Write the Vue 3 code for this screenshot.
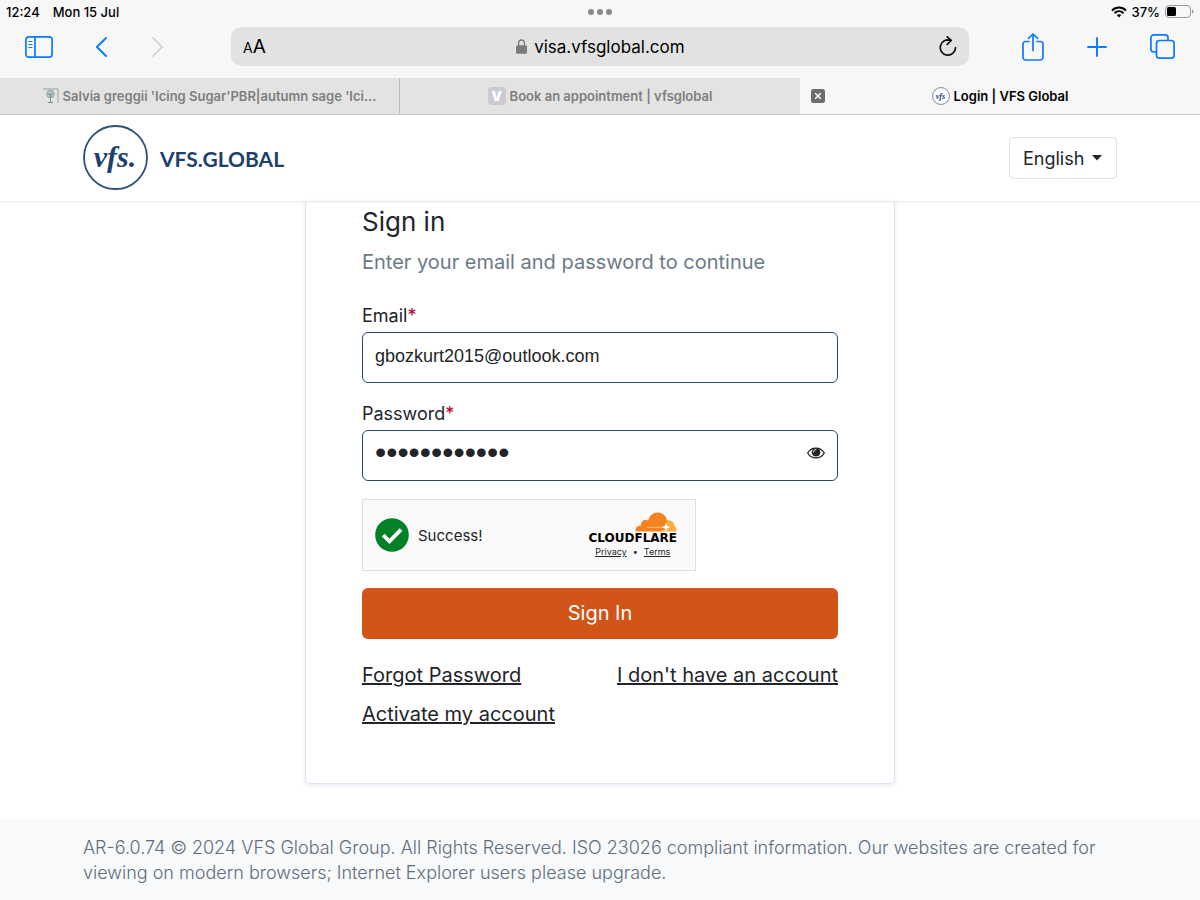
<template>
  <div class="screen">
    <div class="browser">
      <div class="status-bar">
        <div class="status-left">
          <span>12:24</span>
          <span>Mon 15 Jul</span>
        </div>
        <div class="dots"><i></i><i></i><i></i></div>
        <div class="status-right">
          <svg width="16" height="12" viewBox="0 0 16 12" fill="none" stroke="#000" stroke-width="2">
            <path d="M1 4.6C5 .6 11 .6 15 4.6" />
            <path d="M3.5 7.2c2.6-2.5 6.4-2.5 9 0" />
            <path d="M5.7 9.1c1.3-1.2 3.3-1.2 4.6 0L8 11.6z" fill="#000" stroke="none" />
          </svg>
          <span>37%</span>
          <svg width="29" height="14" viewBox="0 0 29 14">
            <rect x=".5" y=".5" width="25" height="12" rx="3.5" fill="none" stroke="#999" />
            <rect x="2" y="2" width="9" height="9" rx="1.5" fill="#000" />
            <path d="M27 4.5c2 .8 2 3.200 0 4z" fill="#999" />
          </svg>
        </div>
      </div>

      <div class="toolbar">
        <div class="tools tools-left">
          <button class="tool" aria-label="Sidebar">
            <svg width="28" height="22" viewBox="0 0 28 22" fill="none" stroke="#0a7aff" stroke-width="1.700">
              <rect x=".9" y=".9" width="26.200" height="20.200" rx="2.800" />
              <path d="M10 1v20" />
              <path d="M3.500 5.500h4M3.500 8.500h4M3.500 11.500h4" stroke-width="1.200" />
            </svg>
          </button>
          <button class="tool" aria-label="Back">
            <svg width="12" height="20" viewBox="0 0 12 20" fill="none" stroke="#0a7aff" stroke-width="1.900" stroke-linecap="round" stroke-linejoin="round">
              <path d="M10 1L.9 10l9.100 9" />
            </svg>
          </button>
          <button class="tool" aria-label="Forward" disabled>
            <svg width="12" height="20" viewBox="0 0 12 20" fill="none" stroke="#cfcfcf" stroke-width="1.700" stroke-linecap="round" stroke-linejoin="round">
              <path d="M2 1l9.100 9L2 19" />
            </svg>
          </button>
        </div>
        <div class="address">
          <button class="tool text-size" aria-label="Text size"><small>A</small>A</button>
          <div class="url">
            <svg width="11" height="15" viewBox="0 0 11 15">
              <path d="M2.600 7V4a2.900 3 0 0 1 5.800 0v3" fill="none" stroke="#7c7c7f" stroke-width="1.300" />
              <rect x="0" y="6.200" width="11" height="8.500" rx="1.500" fill="#7c7c7f" />
            </svg>
            <input v-model="url" type="text" aria-label="Address" />
          </div>
          <button class="tool" aria-label="Reload">
            <svg width="18" height="21" viewBox="0 0 18 21" fill="none" stroke="#111" stroke-width="1.700" stroke-linecap="round" stroke-linejoin="round">
              <path d="M16.500 11.500A7.600 7.600 0 1 1 11.500 4.400L8.500 4" />
              <path d="M8.200 .9l4 3.600-4 3.900" />
            </svg>
          </button>
        </div>
        <div class="tools tools-right">
          <button class="tool" aria-label="Share">
            <svg width="22" height="28" viewBox="0 0 22 28" fill="none" stroke="#0a7aff" stroke-width="1.700" stroke-linecap="round" stroke-linejoin="round">
              <path d="M7 8.500H3.500A2.500 2.500 0 0 0 1 11v13.500A2.500 2.500 0 0 0 3.500 27h15a2.500 2.500 0 0 0 2.500-2.500V11a2.500 2.500 0 0 0-2.500-2.500H15" />
              <path d="M11 17.500V1.200M6.500 5.400L11 1l4.500 4.400" />
            </svg>
          </button>
          <button class="tool" aria-label="New tab">
            <svg width="20" height="20" viewBox="0 0 20 20" stroke="#0a7aff" stroke-width="1.900" stroke-linecap="round">
              <path d="M10 1v18M1 10h18" />
            </svg>
          </button>
          <button class="tool" aria-label="Show tabs">
            <svg width="25" height="25" viewBox="0 0 25 25" fill="none" stroke="#0a7aff" stroke-width="1.700">
              <path d="M6.500 18H3.800A2.900 2.900 0 0 1 .9 15.100V3.800A2.900 2.900 0 0 1 3.800.9h11.300A2.900 2.900 0 0 1 18 3.800v2.700" />
              <rect x="6.500" y="6.500" width="17.600" height="17.600" rx="2.900" />
            </svg>
          </button>
        </div>
      </div>

      <div class="tabs">
        <div class="tab">
          <svg width="16" height="16" viewBox="0 0 16 16" fill="none" stroke="#8fa3a2">
            <path d="M0 1h15v14" />
            <circle cx="7.500" cy="6" r="3.800" fill="#b3c2c0" stroke="#93a9a7" />
            <path d="M7.500 6v8M5 14.500h5M5.500 5l2 2.500 2-2.500" stroke="#6f8f8d" />
          </svg>
          <span>Salvia greggii 'Icing Sugar'PBR|autumn sage 'Ici...</span>
        </div>
        <div class="tab">
          <b class="letter-icon">V</b>
          <span>Book an appointment | vfsglobal</span>
        </div>
        <div class="tab active">
          <button class="tool close" aria-label="Close tab">
            <svg width="14" height="14" viewBox="0 0 14 14">
              <rect width="14" height="14" rx="2.500" fill="#6c6c6e" />
              <path d="M4.200 4.200l5.600 5.600M9.800 4.200L4.200 9.800" stroke="#fff" stroke-width="1.400" />
            </svg>
          </button>
          <svg width="18" height="18" viewBox="0 0 66 66">
            <circle cx="33" cy="33" r="31" fill="#fff" stroke="#5b7391" stroke-width="3" />
            <text x="31" y="43" text-anchor="middle" class="logo-script">vfs</text>
          </svg>
          <span>Login | VFS Global</span>
        </div>
      </div>
    </div>

    <header class="site-header">
      <div class="container header-row">
        <a href="#" class="brand">
          <svg width="66" height="66" viewBox="0 0 66 66">
            <circle cx="32.500" cy="32.500" r="31.500" fill="#fff" stroke="#2d5077" stroke-width="1.800" />
            <text x="32" y="42" text-anchor="middle" class="logo-script">vfs.</text>
          </svg>
          <span>VFS.GLOBAL</span>
        </a>
        <div class="language">
          <select v-model="language" aria-label="Language">
            <option>English</option>
          </select>
          <svg width="10" height="6" viewBox="0 0 10 6"><path d="M0 0h10L5 5.500z" fill="#212529" /></svg>
        </div>
      </div>
    </header>

    <main>
      <form class="card" @submit.prevent>
        <h1>Sign in</h1>
        <p class="subtitle">Enter your email and password to continue</p>

        <label for="email">Email<span class="required">*</span></label>
        <input id="email" v-model="email" class="field" type="email" />

        <label for="password">Password<span class="required">*</span></label>
        <div class="field password-field">
          <input
            id="password"
            v-model="password"
            :class="{ masked: !showPassword }"
            :type="showPassword ? 'text' : 'password'"
          />
          <button type="button" class="tool" aria-label="Show password" @click="showPassword = !showPassword">
            <svg width="18" height="12" viewBox="0 0 18 12">
              <path d="M.7 6C4.500-.6 13.500-.6 17.300 6 13.500 12.600 4.500 12.600.7 6z" fill="#fff" stroke="#212529" stroke-width="1.300" />
              <circle cx="9" cy="5.200" r="4.300" fill="#212529" />
              <path d="M6.400 5a2.600 2.600 0 0 1 2.500-2.600" fill="none" stroke="#fff" stroke-width=".9" stroke-linecap="round" />
            </svg>
          </button>
        </div>

        <div class="turnstile">
          <svg width="34" height="34" viewBox="0 0 34 34">
            <circle cx="17" cy="17" r="16.800" fill="#038127" />
            <path d="M8.200 17.200l6.300 6.200L26 11.600" fill="none" stroke="#fff" stroke-width="3.800" />
          </svg>
          <span class="success">Success!</span>
          <div class="cloudflare">
            <svg width="42" height="20" viewBox="0 0 42 20">
              <path d="M28 19.500L31 8.500c5-1 8 1.500 8.300 5.200 1.600.8 2.200 2.600 2 5.800z" fill="#fbad41" />
              <path d="M.5 19.500c-.2-3.700 1.800-6 5.700-6-.6-4.500 3.300-7 7-5C14.500 3.200 18.200.5 22.700.5c5.300 0 9.200 4 9.300 9.300l-3 9.700z" fill="#f6821f" />
              <path d="M12 15.400h16M27 18.500h4" stroke="#fbc58c" stroke-width=".9" />
              <path d="M31 10.800l1.200 3.200 3.300 1.300-3.300 1.200L31 19.600l-1.300-3.100-3.100-1.200 3.100-1.300z" fill="#fff" />
            </svg>
            <strong>CLOUDFLARE</strong>
            <div class="legal">
              <a href="#">Privacy</a>
              <span>•</span>
              <a href="#">Terms</a>
            </div>
          </div>
        </div>

        <button class="submit" type="submit">Sign In</button>

        <div class="links">
          <a href="#">Forgot Password</a>
          <a href="#">I don't have an account</a>
          <a href="#">Activate my account</a>
        </div>
      </form>
    </main>

    <footer>
      <div class="container">
        AR-6.0.74 © 2024 VFS Global Group. All Rights Reserved. ISO 23026 compliant information. Our websites are
        created for viewing on modern browsers; Internet Explorer users please upgrade.
      </div>
    </footer>
  </div>
</template>

<script setup>
import { ref } from 'vue';

const url = ref('visa.vfsglobal.com');
const language = ref('English');
const email = ref('gbozkurt2015@outlook.com');
const password = ref('abcdefghijkl');
const showPassword = ref(false);
</script>

<style>
body {
  margin: 0;
  background-color: #fff;
}
</style>

<style scoped>
.screen {
  display: flex;
  flex-direction: column;
  min-height: 100vh;
  font-family: Inter, "Liberation Sans", sans-serif;
  color: #212529;
}

.screen * {
  box-sizing: border-box;
}

svg {
  display: block;
  flex: none;
}

button,
input,
select {
  font-family: inherit;
  color: inherit;
}

.tool {
  display: block;
  padding: 0;
  border: none;
  background: none;
  cursor: pointer;
}

.browser {
  background-color: #f7f7f7;
  border-bottom: 1px solid #c8c8c8;
  color: #000;
}

.status-bar {
  display: grid;
  grid-template-columns: 1fr auto 1fr;
  align-items: center;
  height: 23px;
  padding: 0 6px;
  font-size: 13px;
  font-weight: 500;
}

.status-left,
.status-right,
.dots {
  display: flex;
  align-items: center;
}

.status-left {
  gap: 13px;
}

.status-right {
  justify-content: flex-end;
  gap: 5px;
}

.dots {
  gap: 3px;
}

.dots i {
  width: 6px;
  height: 6px;
  border-radius: 50%;
  background-color: #8a8a8a;
}

.toolbar {
  display: flex;
  align-items: center;
  height: 55px;
  padding: 0 25px 8px;
}

.tools {
  display: flex;
  align-items: center;
  gap: 43px;
}

.tools-left {
  margin-right: 68px;
}

.tools-right {
  margin-left: 53px;
}

.address {
  flex: 1;
  display: flex;
  align-items: center;
  height: 39px;
  padding: 0 12px;
  border-radius: 10px;
  background-color: #e2e2e3;
}

.text-size {
  font-size: 19px;
}

.text-size small {
  font-size: 14px;
}

.url {
  flex: 1;
  display: flex;
  align-items: center;
  justify-content: center;
  gap: 7px;
  padding-right: 4px;
}

.url input {
  field-sizing: content;
  padding: 0;
  border: none;
  outline: none;
  background: none;
  font-size: 17px;
}

.tabs {
  display: grid;
  grid-template-columns: repeat(3, 1fr);
  height: 36px;
  font-size: 13px;
  font-weight: 600;
  white-space: nowrap;
}

.tab {
  position: relative;
  display: flex;
  align-items: center;
  justify-content: center;
  gap: 4px;
  background-color: #e3e3e3;
  color: #7e7e7e;
}

.tab:first-child {
  border-right: 1px solid #bdbdbd;
  padding-left: 20px;
}

.tab.active {
  background-color: #f7f7f7;
  color: #000;
}

.close {
  position: absolute;
  left: 11px;
}

.letter-icon {
  width: 18px;
  border-radius: 4px;
  background-color: #cbcad3;
  color: #fff;
  line-height: 18px;
  text-align: center;
}

.container {
  width: 100%;
  max-width: 1034px;
  margin: 0 auto;
}

.site-header {
  border-bottom: 1px solid #eeeeef;
  box-shadow: 0 1px 2px rgba(0, 0, 0, 0.04);
}

.header-row {
  display: flex;
  align-items: center;
  justify-content: space-between;
  height: 86px;
}

.brand {
  display: flex;
  align-items: center;
  gap: 11px;
  color: #1b416d;
  font-family: Lato, sans-serif;
  font-size: 21px;
  font-weight: 700;
  text-decoration: none;
}

.logo-script {
  fill: #1b416d;
  font-family: "Liberation Serif", serif;
  font-size: 30px;
  font-style: italic;
  font-weight: 700;
}

.language {
  position: relative;
}

.language select {
  appearance: none;
  width: 108px;
  height: 42px;
  padding: 0 13px;
  border: 1px solid #dfe1ea;
  border-radius: 4px;
  background-color: #fff;
  font-size: 18px;
}

.language svg {
  position: absolute;
  top: 18px;
  right: 15px;
  pointer-events: none;
}

.card {
  max-width: 590px;
  box-sizing: border-box;
  margin: 0 auto 35px;
  padding: 0 56px 57px;
  border: 1px solid #e1e4f0;
  border-top: none;
  border-radius: 0 0 5px 5px;
  box-shadow: 0 1px 4px rgba(90, 100, 180, 0.15);
}

h1 {
  margin: 0;
  font-size: 26px;
  font-weight: 400;
  line-height: 40px;
}

.subtitle {
  margin: 8px 0 30px;
  color: #6c7a88;
  font-size: 20px;
  line-height: 24px;
}

label {
  display: block;
  margin-bottom: 4px;
  font-size: 18px;
  line-height: 24px;
}

.required {
  color: #b8002b;
}

.field {
  display: block;
  width: 100%;
  height: 51px;
  margin-bottom: 19px;
  padding: 0 12px 2px;
  border: 1px solid #234a70;
  border-radius: 6px;
  outline: none;
  background-color: #fff;
  font-family: "Liberation Sans", sans-serif;
  font-size: 18px;
}

.password-field {
  display: flex;
  align-items: center;
  margin-bottom: 18px;
  padding-bottom: 6px;
}

.password-field input {
  flex: 1;
  min-width: 0;
  padding: 0;
  border: none;
  outline: none;
  background: none;
  font-size: 18px;
}

.password-field .masked {
  font-size: 32px;
}

.turnstile {
  display: flex;
  align-items: center;
  width: 334px;
  max-width: 100%;
  height: 72px;
  margin-bottom: 17px;
  padding: 0 18px 0 12px;
  border: 1px solid #e0e0e0;
  background-color: #fafafa;
}

.success {
  margin-left: 9px;
  font-size: 15px;
}

.cloudflare {
  display: flex;
  flex-direction: column;
  align-items: flex-end;
  margin-left: auto;
  padding-top: 2px;
}

.cloudflare strong {
  color: #000;
  font-family: "DejaVu Sans", sans-serif;
  font-size: 12px;
  line-height: 12px;
}

.legal {
  display: flex;
  align-self: center;
  gap: 6px;
  font-size: 9px;
  line-height: 16px;
}

.legal a,
.links a {
  color: inherit;
}

.submit {
  display: block;
  width: 100%;
  height: 51px;
  margin-bottom: 24px;
  padding: 0 0 2px;
  border: none;
  border-radius: 6px;
  background-color: #d15419;
  color: #fff;
  font-size: 20px;
  cursor: pointer;
}

.links {
  display: flex;
  flex-wrap: wrap;
  justify-content: space-between;
  gap: 15px;
  font-size: 20px;
  line-height: 24px;
}

footer {
  flex: 1;
  padding: 16px 24px 15px;
  background-color: #f7f9fb;
  color: #5f6d7b;
  font-size: 18px;
  font-weight: 300;
  line-height: 25px;
}
</style>
